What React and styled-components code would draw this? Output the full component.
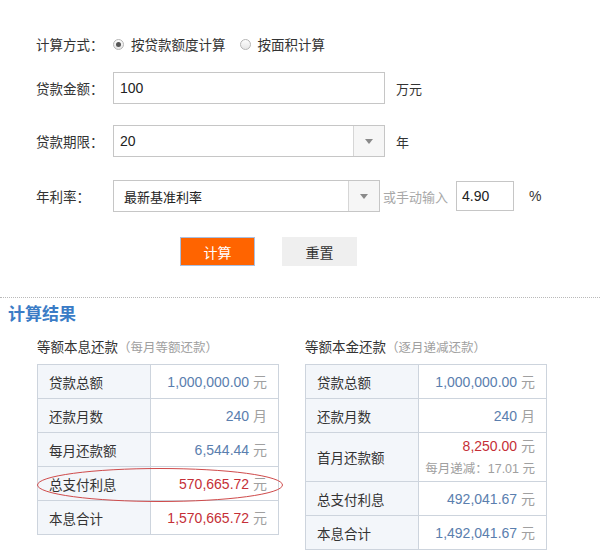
import React from 'react'
import styled, { createGlobalStyle } from 'styled-components'

const GlobalStyle = createGlobalStyle`
  body {
    margin: 0;
    background: #fff;
    color: #333;
    font-family: "Liberation Sans", "Noto Sans CJK SC", sans-serif;
  }
`

const equalPayment = [
  { label: '贷款总额', value: '1,000,000.00', unit: '元' },
  { label: '还款月数', value: '240', unit: '月' },
  { label: '每月还款额', value: '6,544.44', unit: '元' },
  { label: '总支付利息', value: '570,665.72', unit: '元', red: true },
  { label: '本息合计', value: '1,570,665.72', unit: '元', red: true },
]

const equalPrincipal = [
  { label: '贷款总额', value: '1,000,000.00', unit: '元' },
  { label: '还款月数', value: '240', unit: '月' },
  { label: '首月还款额', value: '8,250.00', unit: '元', red: true, note: '每月递减：17.01 元' },
  { label: '总支付利息', value: '492,041.67', unit: '元' },
  { label: '本息合计', value: '1,492,041.67', unit: '元' },
]

function ArrowBox() {
  return (
    <Arrow>
      <svg width="8" height="5" viewBox="0 0 8 5">
        <path d="M0 0 L8 0 L4 5 Z" fill="#8a8a8a" />
      </svg>
    </Arrow>
  )
}

function ResultTable({ rows }) {
  return (
    <Table>
      <tbody>
        {rows.map((r) => (
          <tr key={r.label}>
            <LabelCell tall={!!r.note}>{r.label}</LabelCell>
            <ValueCell>
              <Amount red={r.red}>{r.value}</Amount> <Unit>{r.unit}</Unit>
              {r.note && <Note>{r.note}</Note>}
            </ValueCell>
          </tr>
        ))}
      </tbody>
    </Table>
  )
}

export default function App() {
  return (
    <Page>
      <GlobalStyle />
      <Form>
        <Row space={12}>
          <Label>计算方式：</Label>
          <RadioGroup>
            <RadioItem>
              <Radio checked />
              按贷款额度计算
            </RadioItem>
            <RadioItem>
              <Radio />
              按面积计算
            </RadioItem>
          </RadioGroup>
        </Row>
        <Row space={21}>
          <Label>贷款金额：</Label>
          <Field width={272}>100</Field>
          <After>万元</After>
        </Row>
        <Row space={23}>
          <Label>贷款期限：</Label>
          <Select width={272}>
            <SelectText>20</SelectText>
            <ArrowBox />
          </Select>
          <After>年</After>
        </Row>
        <Row space={25}>
          <Label>年利率：</Label>
          <Select width={267}>
            <SelectText small>最新基准利率</SelectText>
            <ArrowBox />
          </Select>
          <Hint>或手动输入</Hint>
          <Field width={58} short>4.90</Field>
          <Percent>%</Percent>
        </Row>
        <Buttons>
          <Button primary>计算</Button>
          <Button>重置</Button>
        </Buttons>
      </Form>

      <Divider />

      <Results>
        <ResultsTitle>计算结果</ResultsTitle>
        <Columns>
          <Column>
            <SubTitle>
              等额本息还款<SubNote>（每月等额还款）</SubNote>
            </SubTitle>
            <TableWrap>
              <ResultTable rows={equalPayment} />
              <Circle width="248" height="36" viewBox="0 0 248 36">
                <ellipse cx="124" cy="18" rx="122.5" ry="16.5" fill="none" stroke="#cf4b4b" strokeWidth="1" />
              </Circle>
            </TableWrap>
          </Column>
          <Column>
            <SubTitle>
              等额本金还款<SubNote>（逐月递减还款）</SubNote>
            </SubTitle>
            <ResultTable rows={equalPrincipal} />
          </Column>
        </Columns>
      </Results>
    </Page>
  )
}

const Page = styled.div`
  width: 600px;
  padding-top: 28px;
  padding-bottom: 10px;
`

const Form = styled.div`
  padding-left: 36px;
`

const Row = styled.div`
  display: flex;
  align-items: center;
  height: 32px;
  margin-bottom: ${(p) => p.space}px;
  font-size: 13px;
`

const Label = styled.div`
  width: 77px;
  flex-shrink: 0;
  font-size: 13.5px;
  color: #333;
`

const RadioGroup = styled.div`
  display: flex;
  align-items: center;
  gap: 14px;
`

const RadioItem = styled.label`
  display: flex;
  align-items: center;
  gap: 7px;
  font-size: 13.5px;
  color: #333;
`

const Radio = styled.span`
  position: relative;
  width: 11px;
  height: 11px;
  box-sizing: border-box;
  border-radius: 50%;
  border: 1px solid #b5b5b5;
  background: linear-gradient(#fdfdfd, #e6e6e6);

  &::after {
    content: '';
    display: ${(p) => (p.checked ? 'block' : 'none')};
    position: absolute;
    left: 2px;
    top: 2px;
    width: 5px;
    height: 5px;
    border-radius: 50%;
    background: #555;
  }
`

const Field = styled.div`
  width: ${(p) => p.width}px;
  height: ${(p) => (p.short ? 30 : 32)}px;
  box-sizing: border-box;
  border: 1px solid #c6c6c6;
  display: flex;
  align-items: center;
  margin-left: ${(p) => (p.short ? 8 : 0)}px;
  padding-left: ${(p) => (p.short ? 5 : 6)}px;
  font-size: 14px;
  color: #222;
  background: #fff;
`

const Select = styled.div`
  width: ${(p) => p.width}px;
  height: 32px;
  box-sizing: border-box;
  border: 1px solid #c6c6c6;
  display: flex;
  background: #fff;
`

const SelectText = styled.div`
  flex: 1;
  display: flex;
  align-items: center;
  padding-left: ${(p) => (p.small ? 10 : 6)}px;
  font-size: ${(p) => (p.small ? 13 : 14)}px;
  color: #222;
`

const Arrow = styled.div`
  width: 30px;
  border-left: 1px solid #d6d6d6;
  background: #f6f6f6;
  display: flex;
  align-items: center;
  justify-content: center;
`

const After = styled.div`
  margin-left: 11px;
  color: #333;
`

const Hint = styled.div`
  margin-left: 3px;
  color: #a8a8a8;
`

const Percent = styled.div`
  margin-left: 15px;
  font-size: 14px;
  color: #333;
`

const Buttons = styled.div`
  display: flex;
  gap: 27px;
  padding-left: 144px;
`

const Button = styled.div`
  width: 75px;
  height: 29px;
  box-sizing: border-box;
  display: flex;
  align-items: center;
  justify-content: center;
  font-size: 14px;
  color: ${(p) => (p.primary ? '#fff' : '#333')};
  background: ${(p) => (p.primary ? '#ff6400' : '#efefef')};
  border: 1px solid ${(p) => (p.primary ? '#a9bfe0' : '#efefef')};
`

const Divider = styled.div`
  margin-top: 31px;
  border-top: 1px dotted #b9b9b9;
`

const Results = styled.div`
  padding-top: 6px;
`

const ResultsTitle = styled.div`
  padding-left: 8px;
  font-size: 17px;
  font-weight: bold;
  line-height: 22px;
  color: #3b7cc6;
`

const Columns = styled.div`
  display: flex;
  gap: 26px;
  padding-left: 37px;
  margin-top: 12px;
`

const Column = styled.div`
  width: 242px;
`

const SubTitle = styled.div`
  font-size: 13.5px;
  line-height: 20px;
  color: #333;
  margin-bottom: 6px;
`

const SubNote = styled.span`
  font-size: 12.5px;
  color: #a0a0a0;
`

const TableWrap = styled.div`
  position: relative;
`

const Circle = styled.svg`
  position: absolute;
  left: -1px;
  top: 103px;
  pointer-events: none;
`

const Table = styled.table`
  width: 242px;
  table-layout: fixed;
  border-collapse: collapse;
  font-size: 13.5px;
`

const LabelCell = styled.td`
  width: 90px;
  height: ${(p) => (p.tall ? 48 : 33)}px;
  padding: 0 11px;
  border: 1px solid #cdd4dd;
  background: #f3f6fa;
  color: #333;
`

const ValueCell = styled.td`
  padding: 0 11px;
  border: 1px solid #cdd4dd;
  text-align: right;
  background: #fff;
  font-size: 14px;
  line-height: 24px;
  white-space: nowrap;
`

const Amount = styled.span`
  color: ${(p) => (p.red ? '#c52f37' : '#5a7eae')};
`

const Unit = styled.span`
  color: #a0a0a0;
`

const Note = styled.div`
  margin-left: -10px;
  font-size: 12.5px;
  color: #a0a0a0;
  line-height: 22px;
  white-space: nowrap;
`
